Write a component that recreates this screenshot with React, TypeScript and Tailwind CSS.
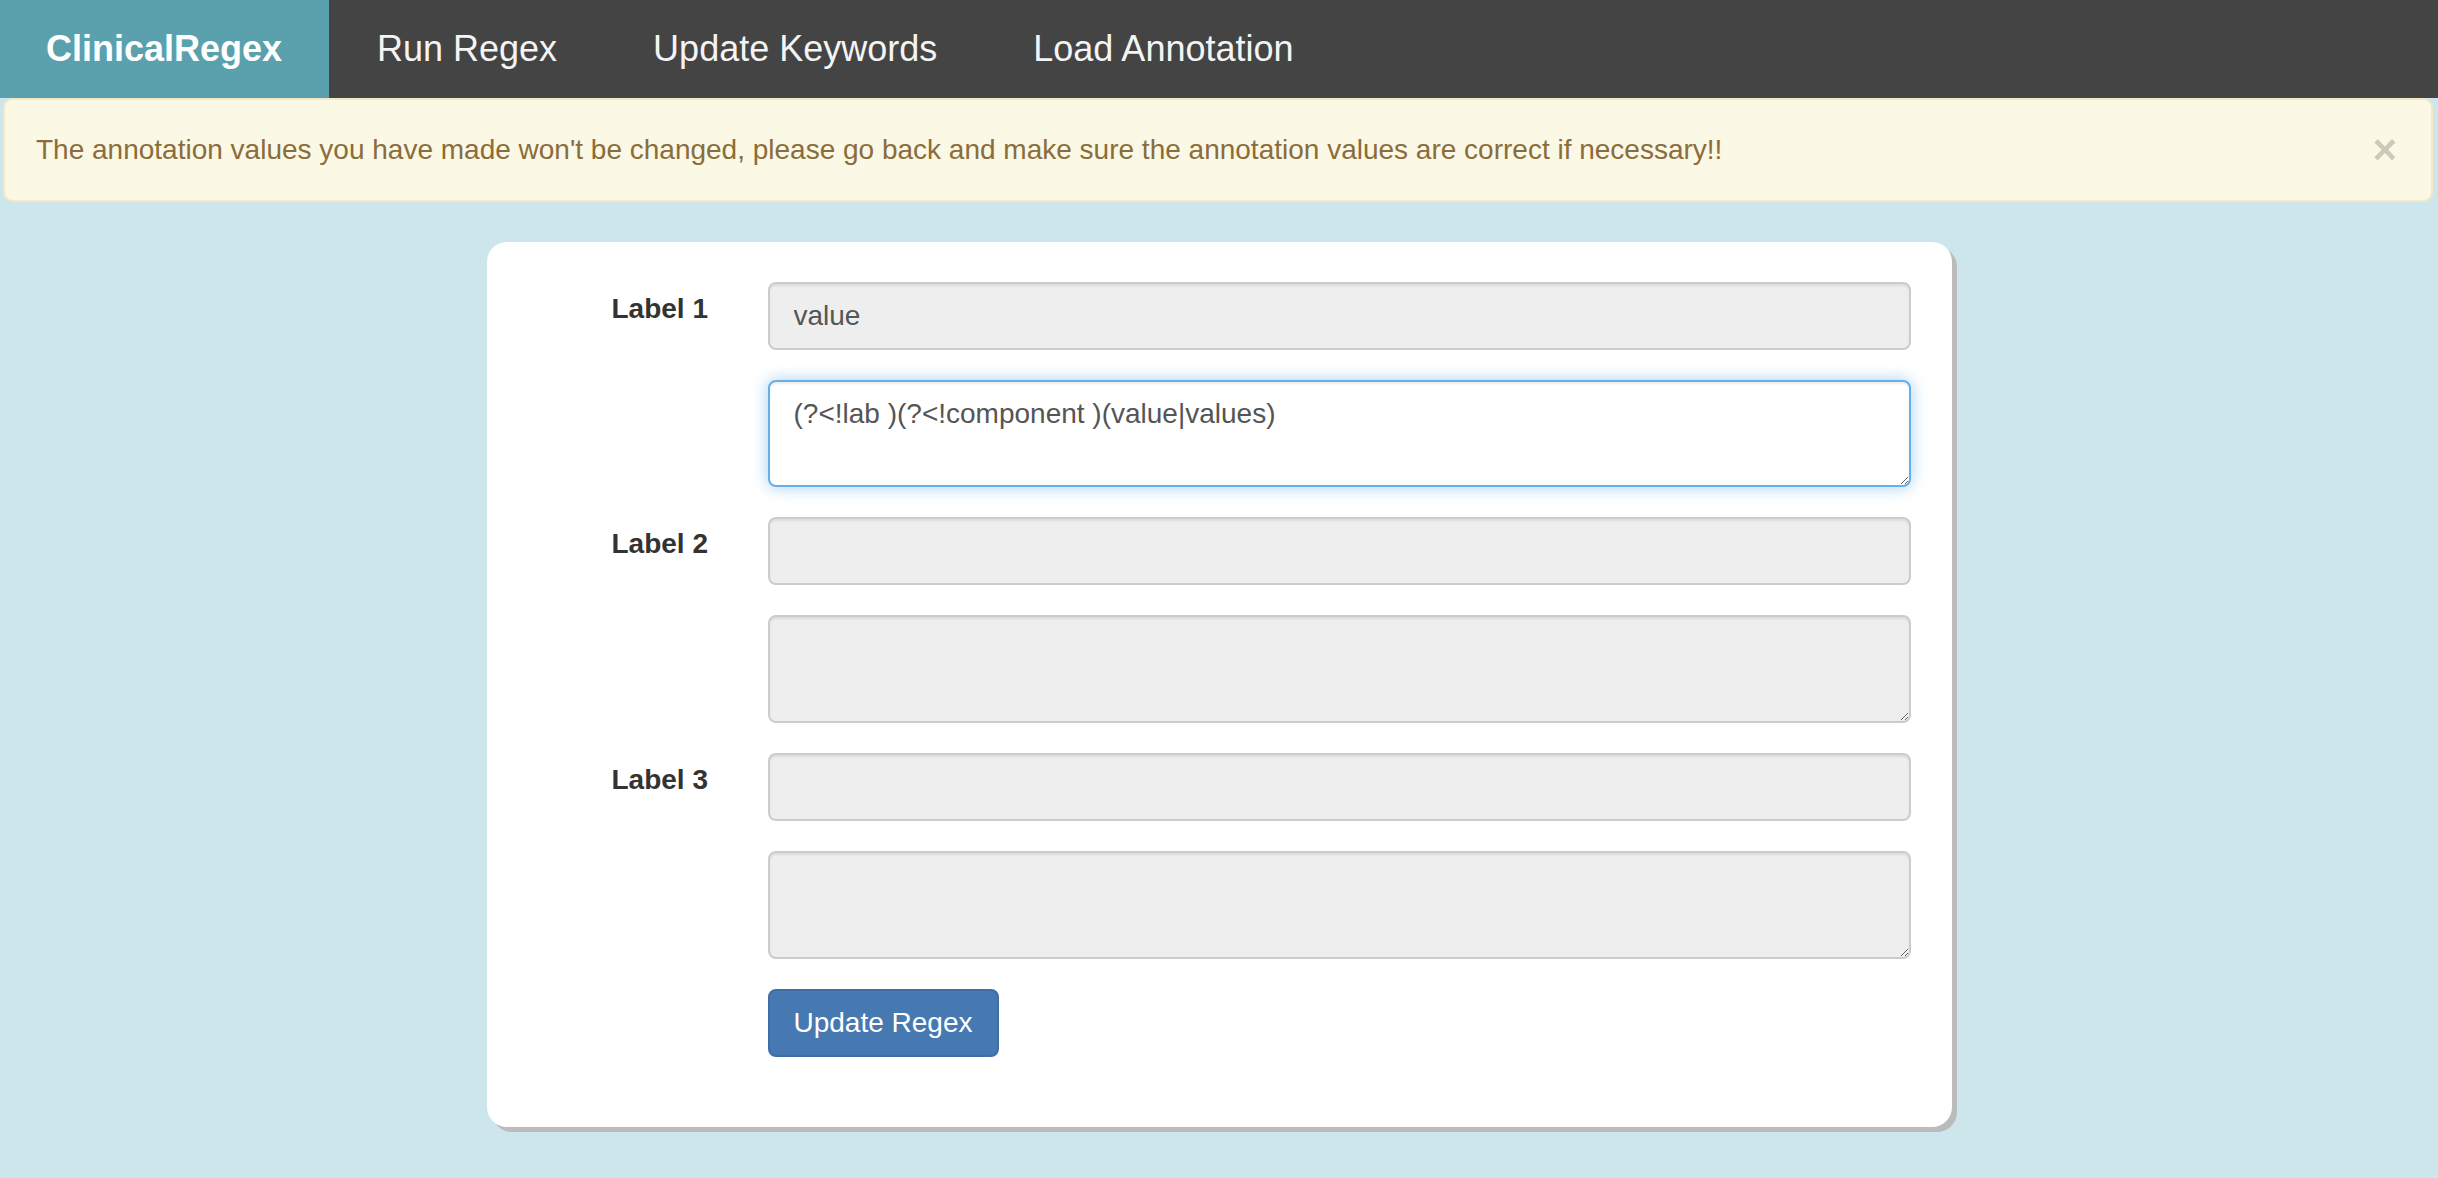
const navLinks = ["Run Regex", "Update Keywords", "Load Annotation"];

const labels = [
  { name: "Label 1", keyword: "value", regex: "(?<!lab )(?<!component )(value|values)" },
  { name: "Label 2", keyword: "", regex: "" },
  { name: "Label 3", keyword: "", regex: "" },
];

const fieldBase =
  "min-w-0 flex-1 border-2 rounded-[8px] px-[24px] text-[28px] text-[#555] outline-none font-['Liberation_Sans',Arial,sans-serif]";

export default function App() {
  return (
    <div className="min-h-screen bg-[#cde6eb] font-['Liberation_Sans',Arial,sans-serif] pb-[46px]">
      <nav className="flex h-[98px] bg-[#444444]">
        <a className="flex w-[329px] items-center bg-[#5ba1ad] pl-[46px] text-[36px] font-bold text-white">
          ClinicalRegex
        </a>
        {navLinks.map((link) => (
          <a key={link} className="flex items-center px-[48px] text-[36px] text-[#f4f4f4]">
            {link}
          </a>
        ))}
      </nav>

      <div className="ml-[3px] mr-[5px] flex items-center rounded-[10px] border-2 border-[#f6e8c6] bg-[#fbf8e5] py-[29px] pl-[31px] pr-[34px]">
        <p className="flex-1 text-[28px] leading-[40px] text-[#8a6d3b]">
          The annotation values you have made won't be changed, please go back and make sure the annotation values are correct if necessary!!
        </p>
        <button className="text-[42px] font-bold leading-none text-black/20">×</button>
      </div>

      <div className="mx-auto mt-[40px] w-[1465px] rounded-[20px] bg-white pt-[40px] pb-[70px] pl-[125px] pr-[41px] shadow-[5px_5px_0_#bbbbbb]">
        <form className="flex flex-col gap-[30px]">
          {labels.map((label, i) => (
            <div key={label.name} className="flex flex-col gap-[30px]">
              <div className="flex">
                <label className="w-[156px] shrink-0 pt-[7px] text-[28px] font-bold leading-[40px] text-[#333]">
                  {label.name}
                </label>
                <input
                  readOnly
                  value={label.keyword}
                  className={`${fieldBase} h-[68px] border-[#cccccc] bg-[#eeeeee] shadow-[inset_0_2px_2px_rgba(0,0,0,0.075)]`}
                />
              </div>
              <div className="flex">
                <div className="w-[156px] shrink-0" />
                <textarea
                  readOnly
                  value={label.regex}
                  className={
                    i === 0
                      ? `${fieldBase} h-[107px] py-[12px] leading-[40px] border-[#66afe9] bg-white shadow-[inset_0_2px_2px_rgba(0,0,0,0.075),0_0_16px_rgba(102,175,233,0.6)]`
                      : `${fieldBase} h-[108px] py-[12px] leading-[40px] border-[#cccccc] bg-[#eeeeee] shadow-[inset_0_2px_2px_rgba(0,0,0,0.075)]`
                  }
                />
              </div>
            </div>
          ))}
          <div className="flex">
            <div className="w-[156px] shrink-0" />
            <button
              type="button"
              className="h-[68px] rounded-[8px] border-2 border-[#3d6ea5] bg-[#4679b2] px-[24px] text-[28px] text-white"
            >
              Update Regex
            </button>
          </div>
        </form>
      </div>
    </div>
  );
}
